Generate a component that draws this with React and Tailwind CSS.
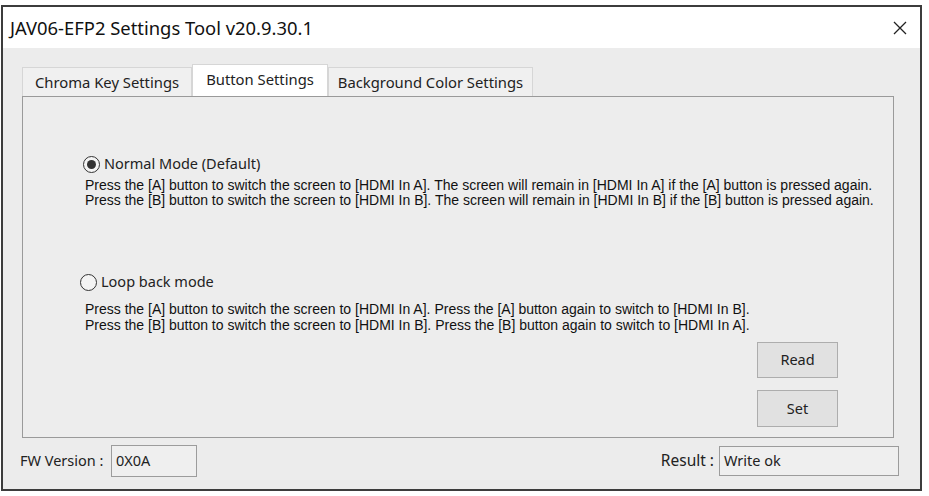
import React from "react";

const ui = { fontFamily: '"Noto Sans", "Open Sans", sans-serif' };
const desc = { fontFamily: '"Liberation Sans", Arial, sans-serif' };

function Radio({ checked }) {
  return (
    <span className="w-[17px] h-[17px] rounded-full border border-[#333] bg-[#f4f4f4] flex items-center justify-center shrink-0">
      {checked && <span className="w-[9px] h-[9px] rounded-full bg-[#333]" />}
    </span>
  );
}

export default function App() {
  return (
    <div className="w-[929px] h-[496px] bg-white pl-px pt-[5px]" style={ui}>
      <div className="w-[921px] h-[486px] border-2 border-[#3c3c3c] flex flex-col">
        <div className="h-[41px] bg-white flex items-center justify-between pl-[7px] pr-[13px] shrink-0">
          <span className="text-[18.4px] text-[#111]">JAV06-EFP2 Settings Tool v20.9.30.1</span>
          <svg width="14" height="14" viewBox="0 0 14 14">
            <path d="M1 1 L13 13 M13 1 L1 13" stroke="#222" strokeWidth="1.3" />
          </svg>
        </div>
        <div className="flex-1 bg-[#ececec] flex flex-col pt-[16px] pl-[19px]">
          <div className="flex items-end h-[32px]">
            <div className="w-[170px] h-[29px] border border-b-0 border-[#d6d6d6] bg-[#f0f0f0] flex items-center justify-center text-[14.8px] text-[#222]">
              Chroma Key Settings
            </div>
            <div className="w-[136px] h-[32px] border border-b-0 border-[#d6d6d6] bg-white flex items-center justify-center text-[14.8px] text-[#222] pb-[3px]">
              Button Settings
            </div>
            <div className="w-[205px] h-[29px] border border-b-0 border-[#d6d6d6] bg-[#f0f0f0] flex items-center justify-center text-[14.8px] text-[#222]">
              Background Color Settings
            </div>
          </div>
          <div className="w-[872px] h-[342px] border border-[#9a9a9a] bg-[#ededed] flex flex-col pl-[60px] pt-[57px]">
            <div className="flex items-center h-[20px] gap-[4px] text-[14.5px] text-[#222]">
              <Radio checked />
              <span>Normal Mode (Default)</span>
            </div>
            <div className="mt-[4px] ml-[2px] text-[14px] leading-[15px] text-[#111]" style={desc}>
              <div>Press the [A] button to switch the screen to [HDMI In A]. The screen will remain in [HDMI In A] if the [A] button is pressed again.</div>
              <div>Press the [B] button to switch the screen to [HDMI In B]. The screen will remain in [HDMI In B] if the [B] button is pressed again.</div>
            </div>
            <div className="mt-[64px] flex items-center h-[20px] gap-[4px] text-[14.5px] text-[#222] -ml-[3px]">
              <Radio />
              <span>Loop back mode</span>
            </div>
            <div className="mt-[9px] ml-[2px] text-[14px] leading-[16px] text-[#111]" style={desc}>
              <div>Press the [A] button to switch the screen to [HDMI In A]. Press the [A] button again to switch to [HDMI In B].</div>
              <div>Press the [B] button to switch the screen to [HDMI In B]. Press the [B] button again to switch to [HDMI In A].</div>
            </div>
            <div className="self-end mr-[55px] mt-[9px] flex flex-col gap-[12px]">
              <div className="w-[81px] h-[36px] border border-[#adadad] bg-[#e1e1e1] flex items-center justify-center text-[14.5px] text-[#222]">
                Read
              </div>
              <div className="w-[81px] h-[37px] border border-[#adadad] bg-[#e1e1e1] flex items-center justify-center text-[14.5px] text-[#222]">
                Set
              </div>
            </div>
          </div>
          <div className="flex items-center mt-[7px] text-[14.5px] text-[#222] pr-[21px]">
            <span className="-ml-[2px] w-[91px]">FW Version :</span>
            <div className="w-[86px] h-[32px] border border-[#9c9c9c] bg-[#efefef] flex items-center pl-[4px]">0X0A</div>
            <div className="flex-1" />
            <span className="mr-[5px] text-[15.5px]">Result :</span>
            <div className="w-[180px] h-[30px] border border-[#9c9c9c] bg-[#efefef] flex items-center pl-[4px]">Write ok</div>
          </div>
        </div>
      </div>
    </div>
  );
}
